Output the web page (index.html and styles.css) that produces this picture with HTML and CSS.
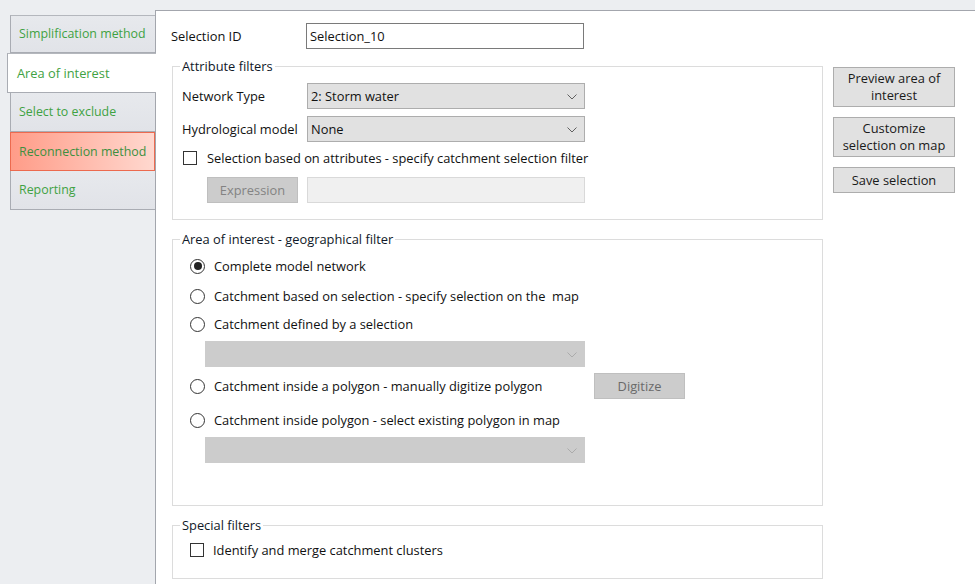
FILE: index.html
```html
<!DOCTYPE html>
<html>
<head>
<title>Area of interest</title>

<link rel="stylesheet" href="styles.css">

</head>
<body>

<div class="window">

	<nav class="tabs">
		<div class="tab">Simplification method</div>
		<div class="tab active">Area of interest</div>
		<div class="tab">Select to exclude</div>
		<div class="tab warn">Reconnection method</div>
		<div class="tab">Reporting</div>
	</nav>

	<main class="panel">
		<div class="form">

			<div class="id-row">
				<span class="id-label">Selection ID</span>
				<span class="textbox">Selection_10</span>
			</div>

			<div class="groups">

				<fieldset class="group attr">
					<legend>Attribute filters</legend>

					<div class="field-row">
						<span class="field-label">Network Type</span>
						<span class="combo">2: Storm water<svg class="chev" viewBox="0 0 10 6"><path d="M0.5 0.5 L5 5 L9.5 0.5"/></svg></span>
					</div>
					<div class="field-row">
						<span class="field-label">Hydrological model</span>
						<span class="combo">None<svg class="chev" viewBox="0 0 10 6"><path d="M0.5 0.5 L5 5 L9.5 0.5"/></svg></span>
					</div>
					<div class="check-row">
						<span class="checkbox"></span>
						<span>Selection based on attributes - specify catchment selection filter</span>
					</div>
					<div class="expr-row">
						<span class="btn-off">Expression</span>
						<span class="field-off"></span>
					</div>
				</fieldset>

				<fieldset class="group geo">
					<legend>Area of interest - geographical filter</legend>

					<div class="option first">
						<span class="radio checked"></span>
						<span>Complete model network</span>
					</div>
					<div class="option">
						<span class="radio"></span>
						<span>Catchment based on selection - specify selection on the&nbsp; map</span>
					</div>
					<div class="option tight">
						<span class="radio"></span>
						<span>Catchment defined by a selection</span>
					</div>
					<span class="combo off"><svg class="chev" viewBox="0 0 10 6"><path d="M0.5 0.5 L5 5 L9.5 0.5"/></svg></span>
					<div class="action-row">
						<div class="option wide">
							<span class="radio"></span>
							<span>Catchment inside a polygon - manually digitize polygon</span>
						</div>
						<span class="btn-off digitize">Digitize</span>
					</div>
					<div class="option gap">
						<span class="radio"></span>
						<span>Catchment inside polygon - select existing polygon in map</span>
					</div>
					<span class="combo off"><svg class="chev" viewBox="0 0 10 6"><path d="M0.5 0.5 L5 5 L9.5 0.5"/></svg></span>
				</fieldset>

				<fieldset class="group special">
					<legend>Special filters</legend>

					<div class="check-row">
						<span class="checkbox"></span>
						<span>Identify and merge catchment clusters</span>
					</div>
				</fieldset>

			</div>

			<div class="actions">
				<span class="btn tall">Preview area of<br>interest</span>
				<span class="btn tall">Customize<br>selection on map</span>
				<span class="btn">Save selection</span>
			</div>

		</div>
	</main>

</div>

</body>
</html>
```

FILE: styles.css
```css
body {
	margin: 0;
	background-color: #eceef1;
	font-family: "Open Sans", "Noto Sans", sans-serif;
	font-size: 12.85px;
	line-height: 16px;
	color: #111;
}

.window {
	display: flex;
	height: 584px;
	padding-top: 10px;
	box-sizing: border-box;
	overflow: hidden;
}

/* left tab strip */

.tabs {
	flex: none;
	width: 155px;
	padding: 5px 0 0 10px;
	box-sizing: border-box;
	display: flex;
	flex-direction: column;
}

.tab {
	height: 39px;
	box-sizing: border-box;
	display: flex;
	align-items: center;
	padding-left: 8px;
	border: 1px solid #a9acb3;
	border-right: none;
	border-top-color: #b4b7bd;
	background: linear-gradient(#e7e9ed, #e1e3e8);
	color: #3fa243;
	font-size: 12.4px;
	white-space: nowrap;
}

.tab:first-child {
	height: 38px;
}

.tab + .tab {
	border-top: none;
}

.tab.active {
	position: relative;
	z-index: 1;
	margin-left: -3px;
	margin-right: -1px;
	padding-left: 9px;
	height: 40px;
	border-top: 1px solid #b4b7bd;
	background: #fff;
	font-size: 12.85px;
}

.tab.warn {
	border: 1px solid #ec6a4f;
	background: linear-gradient(to right, #ff9c88, #ffd8cf);
	color: #3d9040;
}

.tab.warn + .tab {
	border-top: none;
}

/* right panel */

.panel {
	flex: 1;
	background-color: #fff;
	border-top: 1px solid #a3a6ad;
	border-left: 1px solid #a3a6ad;
	padding: 12px 0 0 16px;
}

.form {
	display: grid;
	grid-template-columns: 651px 122px;
	column-gap: 10px;
	align-items: start;
}

.id-row {
	grid-column: 1;
	display: flex;
	align-items: center;
	height: 26px;
}

.id-label {
	width: 135px;
	margin-left: -1px;
}

.textbox {
	width: 278px;
	height: 26px;
	box-sizing: border-box;
	border: 1px solid #7a7a7a;
	padding: 0 3px;
	display: flex;
	align-items: center;
}

.groups {
	grid-column: 1;
	grid-row: 2;
}

.actions {
	grid-column: 2;
	grid-row: 2;
	margin-top: 18px;
	display: flex;
	flex-direction: column;
	gap: 10px;
}

.btn {
	height: 26px;
	box-sizing: border-box;
	border: 1px solid #adadad;
	background-color: #e1e1e1;
	display: flex;
	align-items: center;
	justify-content: center;
	text-align: center;
	line-height: 17px;
	color: #1a1a1a;
}

.btn.tall {
	height: 40px;
}

/* group boxes */

.group {
	margin: 0;
	min-width: 0;
	border: 1px solid #dcdcdc;
	padding: 9px 9px 16px 9px;
}

.group legend {
	padding: 0 2px;
	margin-left: -2px;
	line-height: 16px;
	color: #101828;
}

.attr {
	margin-top: 9px;
}

.geo {
	margin-top: 11px;
	padding-bottom: 42px;
}

.special {
	margin-top: 11px;
	padding-top: 8px;
	padding-bottom: 19px;
}

.field-row {
	display: flex;
	align-items: center;
	height: 26px;
}

.field-row + .field-row {
	margin-top: 7px;
}

.field-label {
	width: 125px;
}

.combo {
	width: 278px;
	height: 26px;
	box-sizing: border-box;
	border: 1px solid #adadad;
	background-color: #e1e1e1;
	padding: 0 3px;
	display: flex;
	align-items: center;
	position: relative;
}

.combo.off {
	width: 380px;
	margin: 7px 0 0 23px;
	border-color: #cccccc;
	background-color: #cccccc;
}

.chev {
	position: absolute;
	right: 7px;
	top: 10px;
	width: 10px;
	height: 6px;
	fill: none;
	stroke: #606060;
	stroke-width: 1;
}

.combo.off .chev {
	stroke: #ababab;
}

.check-row {
	display: flex;
	align-items: center;
	height: 18px;
	margin-top: 7px;
	gap: 10px;
}

.special .check-row {
	margin: 0 0 0 8px;
	gap: 9px;
}

.attr .check-row {
	margin-left: 1px;
}

.checkbox {
	width: 14px;
	height: 14px;
	box-sizing: border-box;
	border: 1px solid #333;
	background: #fff;
	flex: none;
}

.expr-row {
	display: flex;
	align-items: center;
	margin: 10px 0 0 25px;
	gap: 9px;
}

.btn-off {
	width: 91px;
	height: 26px;
	box-sizing: border-box;
	border: 1px solid #bfbfbf;
	background-color: #cccccc;
	color: #838383;
	display: flex;
	align-items: center;
	justify-content: center;
}

.field-off {
	width: 278px;
	height: 26px;
	box-sizing: border-box;
	border: 1px solid #d9d9d9;
	background-color: #f0f0f0;
}

/* radio options */

.option {
	display: flex;
	align-items: center;
	height: 20px;
	margin: 10px 0 0 8px;
	gap: 9px;
	white-space: nowrap;
}

.option.first {
	margin-top: 0;
}

.option.tight {
	margin-top: 8px;
}

.option.gap {
	margin-top: 11px;
}

.radio {
	width: 15px;
	height: 15px;
	box-sizing: border-box;
	border: 1px solid #333;
	border-radius: 50%;
	background: #fff;
	flex: none;
	display: flex;
	align-items: center;
	justify-content: center;
}

.radio.checked::after {
	content: "";
	width: 8px;
	height: 8px;
	border-radius: 50%;
	background-color: #222;
}

.action-row {
	display: flex;
	align-items: center;
	height: 26px;
	margin-top: 6px;
}

.option.wide {
	width: 404px;
	margin: 0 0 0 8px;
}

.digitize {
	color: #6a6a6a;
}
```
